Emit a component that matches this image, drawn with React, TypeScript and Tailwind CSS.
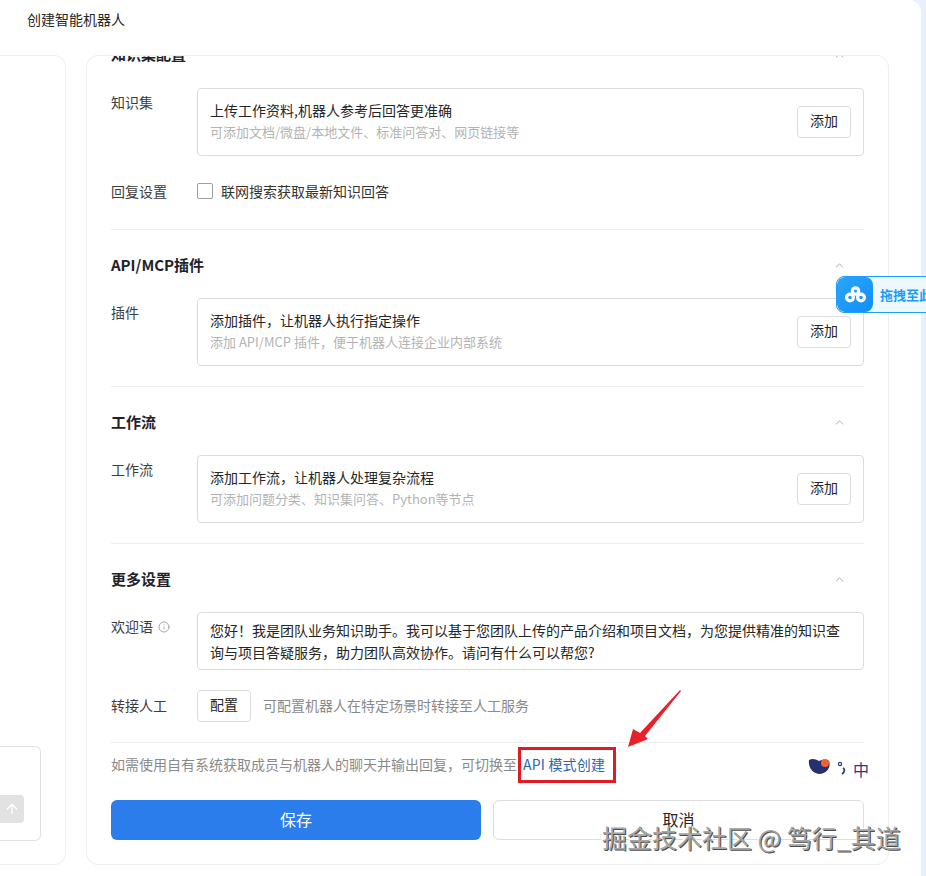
import { ChevronUp, Info, ArrowUp } from "lucide-react";

function Section({ title, children }: { title: string; children: React.ReactNode }) {
  return (
    <section className="border-b border-[#ececec] pb-5 pt-[25px]">
      <div className="flex h-[20px] items-center justify-between pr-[18px]">
        <h2 className="text-[15px] font-semibold leading-5 text-[#1f2329]">{title}</h2>
        <ChevronUp size={13} strokeWidth={1.5} className="text-[#9a9a9a]" />
      </div>
      <div className="mt-[23px]">{children}</div>
    </section>
  );
}

function AddBox({ label, title, desc }: { label: string; title: string; desc: string }) {
  return (
    <div className="flex">
      <div className="w-[86px] pt-[4px] text-[14px] leading-5 text-[#3d3d3d]">{label}</div>
      <div className="flex h-[68px] flex-1 items-center justify-between rounded-[4px] border border-[#dcdcdc] pl-3 pr-3">
        <div className="-mt-[2px]">
          <div className="text-[14px] leading-5 text-[#262626]">{title}</div>
          <div className="mt-[2px] text-[13px] leading-5 text-[#b3b3b3]">{desc}</div>
        </div>
        <OutlineButton>添加</OutlineButton>
      </div>
    </div>
  );
}

function OutlineButton({ children }: { children: React.ReactNode }) {
  return (
    <button className="h-8 w-[54px] rounded-[4px] border border-[#dddddd] bg-white pb-[3px] text-[14px] text-[#262626]">
      {children}
    </button>
  );
}

export default function App() {
  return (
    <div
      className="relative h-[876px] w-[926px] overflow-hidden bg-[#e9effb] text-[#262626]"
      style={{ fontFamily: '"Noto Sans CJK SC", "Noto Sans", sans-serif' }}
    >
      <main className="h-full w-[921px] rounded-tr-[12px] bg-white">
        <header className="h-[55px] pl-[27px] pt-[9px] text-[14px] leading-5 text-[#262626]">创建智能机器人</header>

        <div className="flex">
          {/* left preview panel, mostly cut off */}
          <div className="relative h-[810px] w-[66px] rounded-r-[12px] border border-l-0 border-[#eeeeee]">
            <div className="absolute left-0 top-[690px] h-[95px] w-[41px] rounded-r-[6px] border border-l-0 border-[#e0e0e0]">
              <div className="absolute left-0 top-[48px] flex h-7 w-6 items-center justify-center rounded-r-[4px] bg-[#e2e2e2]">
                <ArrowUp size={16} className="text-white" />
              </div>
            </div>
          </div>

          {/* form card */}
          <div className="ml-5 h-[810px] w-[803px] overflow-hidden rounded-[12px] border border-[#eeeeee] px-6">
            <div className="flex h-[32px] items-start justify-between pr-[18px]">
              <h2 className="-mt-[12px] text-[15px] font-semibold leading-5 text-[#1f2329]">知识集配置</h2>
              <ChevronUp size={13} strokeWidth={1.5} className="-mt-[7px] text-[#9a9a9a]" />
            </div>

            <div className="border-b border-[#ececec] pb-[28px]">
              <AddBox
                label="知识集"
                title="上传工作资料,机器人参考后回答更准确"
                desc="可添加文档/微盘/本地文件、标准问答对、网页链接等"
              />
              <div className="mt-[25px] flex items-center">
                <div className="w-[86px] text-[14px] leading-5 text-[#3d3d3d]">回复设置</div>
                <span className="h-4 w-4 rounded-[2px] border border-[#9e9e9e]" />
                <span className="ml-2 text-[14px] leading-5 text-[#333333]">联网搜索获取最新知识回答</span>
              </div>
            </div>

            <Section title="API/MCP插件">
              <AddBox
                label="插件"
                title="添加插件，让机器人执行指定操作"
                desc="添加 API/MCP 插件，便于机器人连接企业内部系统"
              />
            </Section>

            <Section title="工作流">
              <AddBox
                label="工作流"
                title="添加工作流，让机器人处理复杂流程"
                desc="可添加问题分类、知识集问答、Python等节点"
              />
            </Section>

            <section className="border-b border-[#ececec] pb-5 pt-[25px]">
              <div className="flex h-[20px] items-center justify-between pr-[18px]">
                <h2 className="text-[15px] font-semibold leading-5 text-[#1f2329]">更多设置</h2>
                <ChevronUp size={13} strokeWidth={1.5} className="text-[#9a9a9a]" />
              </div>
              <div className="mt-[23px] flex">
                <div className="flex w-[86px] items-start gap-[5px] pt-[4px] text-[14px] leading-5 text-[#3d3d3d]">
                  欢迎语
                  <Info size={12} className="mt-[5px] text-[#a5a5a5]" />
                </div>
                <div className="h-[58px] flex-1 rounded-[4px] border border-[#dcdcdc] px-3 py-[6px] text-[14px] leading-[22px] text-[#262626]">
                  您好！我是团队业务知识助手。我可以基于您团队上传的产品介绍和项目文档，为您提供精准的知识查询与项目答疑服务，助力团队高效协作。请问有什么可以帮您?
                </div>
              </div>
              <div className="mt-5 flex items-center">
                <div className="w-[86px] pb-[3px] text-[14px] leading-5 text-[#3d3d3d]">转接人工</div>
                <OutlineButton>配置</OutlineButton>
                <span className="ml-3 pb-[2px] text-[14px] leading-5 text-[#8a8a8a]">可配置机器人在特定场景时转接至人工服务</span>
              </div>
            </section>

            <p className="mt-[11px] text-[14px] leading-5 text-[#8a8a8a]">
              如需使用自有系统获取成员与机器人的聊天并输出回复，可切换至
              <span className="ml-[6px] tracking-[0.2px] text-[#2b66b1]">API 模式创建</span>
            </p>

            <div className="mt-[26px] flex gap-3">
              <button className="h-10 w-[370px] rounded-[6px] bg-[#2b7deb] pb-[3px] text-[16px] text-white">保存</button>
              <button className="h-10 flex-1 rounded-[6px] border border-[#dddddd] bg-white pb-[3px] text-[16px] text-[#262626]">
                取消
              </button>
            </div>
          </div>
        </div>
      </main>

      {/* cloud drive drop widget */}
      <div className="absolute left-[836px] top-[276px] flex h-[37px] w-[100px] overflow-hidden rounded-l-[8px] border border-[#1ea0fa] bg-[#eef8ff]">
        <div className="flex w-[36px] items-center justify-center rounded-[8px] bg-gradient-to-br from-[#2aa6fb] to-[#0f8ef5]">
          <svg width="21" height="17" viewBox="0 0 21 17" fill="none" stroke="white" strokeWidth="3.2">
            <circle cx="10.5" cy="5" r="3.2" />
            <circle cx="5" cy="11.5" r="3.4" />
            <circle cx="16" cy="11.5" r="3.4" />
          </svg>
        </div>
        <span className="ml-[7px] whitespace-nowrap text-[13px] font-bold leading-[36px] text-[#1a9dfb]">拖拽至此</span>
      </div>

      {/* annotation */}
      <div className="absolute left-[518px] top-[747px] h-[36px] w-[98px] border-[3px] border-[#e01b24]" />
      <svg className="absolute left-[625px] top-[686px]" width="58" height="64" viewBox="0 0 58 64">
        <path d="M3 61 L8 43 L15 47 L55 4 L56 5 L20 50 L23 53 Z" fill="#e8202a" />
      </svg>

      {/* logo */}
      <div className="absolute left-[808px] top-[759px] flex h-5 items-center">
        <svg width="38" height="20" viewBox="0 0 38 20" className="-mt-[2px]">
          <path d="M1 2 C4 0 8 1 11 3 C14 2 18 1 21 3 C23 8 20 15 12 16 C5 16 0 10 1 2 Z" fill="#26306f" />
          <circle cx="17" cy="5" r="4" fill="#f2622e" />
          <circle cx="32" cy="6" r="1.6" fill="none" stroke="#2a3a85" strokeWidth="1.2" />
          <path d="M35 10 C37 11 37 14 34 16" fill="none" stroke="#2a3a85" strokeWidth="1.8" />
        </svg>
        <span className="ml-[7px] text-[16px] leading-5 text-[#2a3a85]">中</span>
      </div>

      {/* watermark */}
      <div
        className="absolute left-[602px] top-[821px] whitespace-nowrap text-[25px] leading-8 text-[#a6a6a6]"
        style={{ textShadow: "1px 1px 0 #4d4d4d, -1px -1px 0 #ffffff" }}
      >
        掘金技术社区 @ 笃行_其道
      </div>
    </div>
  );
}
